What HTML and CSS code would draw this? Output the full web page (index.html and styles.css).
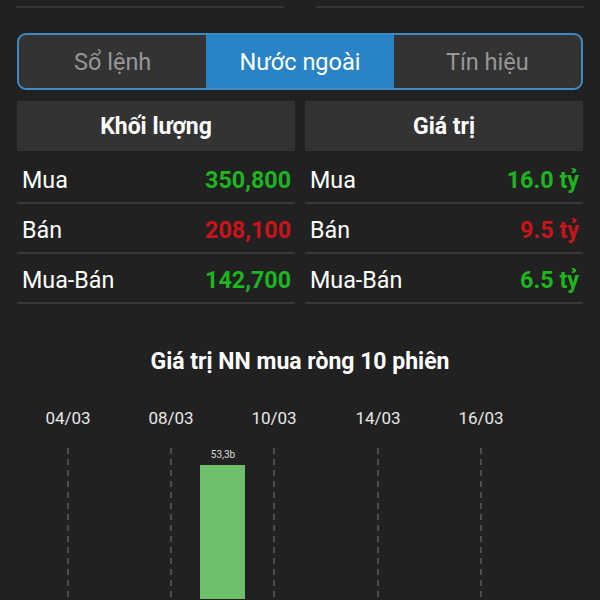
FILE: index.html
```html
<!DOCTYPE html>
<html lang="vi">
<head>
  <meta charset="UTF-8" />
  <meta name="viewport" content="width=device-width, initial-scale=1.0" />
  <title>Nước ngoài</title>
  <link rel="stylesheet" href="styles.css">
</head>
<body>
  <div class="trang">
    <div class="o-nhap">
      <div class="dong-nhap"></div>
      <div class="dong-nhap"></div>
    </div>

    <div class="tabs">
      <div class="tab">Sổ lệnh</div>
      <div class="tab active">Nước ngoài</div>
      <div class="tab">Tín hiệu</div>
    </div>

    <div class="bang-doi">
      <div class="bang">
        <div class="tieu-de">Khối lượng</div>
        <div class="hang"><span>Mua</span><span class="so tang">350,800</span></div>
        <div class="hang"><span>Bán</span><span class="so giam">208,100</span></div>
        <div class="hang"><span>Mua-Bán</span><span class="so tang">142,700</span></div>
      </div>
      <div class="bang">
        <div class="tieu-de">Giá trị</div>
        <div class="hang"><span>Mua</span><span class="so tang">16.0 tỷ</span></div>
        <div class="hang"><span>Bán</span><span class="so giam">9.5 tỷ</span></div>
        <div class="hang"><span>Mua-Bán</span><span class="so tang">6.5 tỷ</span></div>
      </div>
    </div>

    <h2 class="tieu-de-bieu-do">Giá trị NN mua ròng 10 phiên</h2>
  </div>

  <svg class="bieu-do" width="600" height="210" viewBox="0 0 600 210">
    <g class="ngay">
      <text x="68" y="35">04/03</text>
      <text x="171" y="35">08/03</text>
      <text x="274" y="35">10/03</text>
      <text x="378" y="35">14/03</text>
      <text x="481" y="35">16/03</text>
    </g>
    <g class="luoi">
      <line x1="68" y1="59" x2="68" y2="210" />
      <line x1="171" y1="59" x2="171" y2="210" />
      <line x1="274" y1="59" x2="274" y2="210" />
      <line x1="378" y1="59" x2="378" y2="210" />
      <line x1="481" y1="59" x2="481" y2="210" />
    </g>
    <rect class="cot" x="200" y="76" width="45" height="134" />
    <text class="nhan-cot" x="223" y="69">53,3b</text>
  </svg>
</body>
</html>
```

FILE: styles.css
```css
body {
  margin: 0;
  background-color: #212121;
  font-family: Roboto, "Noto Sans", sans-serif;
  color: #fff;
  width: 600px;
  height: 600px;
  overflow: hidden;
}
.trang {
  padding: 0 17px;
}
.o-nhap {
  display: flex;
  gap: 34px;
  padding-top: 6px;
}
.dong-nhap {
  flex: 1;
  height: 2px;
  background: #363636;
  margin: 0 -1px;
}
.tabs {
  display: flex;
  margin-top: 25px;
  height: 57px;
  box-sizing: border-box;
  border: 2px solid #3b8cc6;
  border-radius: 9px;
  overflow: hidden;
  background: #333;
}
.tab {
  flex: 1;
  display: flex;
  align-items: center;
  justify-content: center;
  font-size: 23.5px;
  color: #979797;
}
.tab.active {
  background: #2a83c5;
  color: #fff;
}
.bang-doi {
  display: flex;
  gap: 10px;
  margin-top: 11px;
}
.bang {
  flex: 1;
}
.tieu-de {
  height: 50px;
  background: #333;
  display: flex;
  align-items: center;
  justify-content: center;
  font-weight: bold;
  font-size: 23px;
  margin-bottom: 3px;
}
.hang {
  height: 50px;
  box-sizing: border-box;
  border-bottom: 2px solid #393939;
  display: flex;
  align-items: center;
  justify-content: space-between;
  padding: 3px 4px 0 5px;
  font-size: 23.3px;
}
.so {
  font-weight: bold;
}
.tang {
  color: #1db51f;
}
.giam {
  color: #c9141c;
}
.tieu-de-bieu-do {
  margin: 45px 0 0;
  text-align: center;
  font-size: 23px;
  line-height: 26px;
  font-weight: bold;
}
.bieu-do {
  display: block;
  margin-top: 14px;
}
.ngay text {
  fill: #e8e8e8;
  font-size: 17px;
  text-anchor: middle;
}
.luoi line {
  stroke: #7a7a7a;
  stroke-width: 1;
  stroke-dasharray: 6 5;
}
.cot {
  fill: #6fbe6b;
}
.nhan-cot {
  fill: #dcdcdc;
  font-size: 10px;
  text-anchor: middle;
}
```
